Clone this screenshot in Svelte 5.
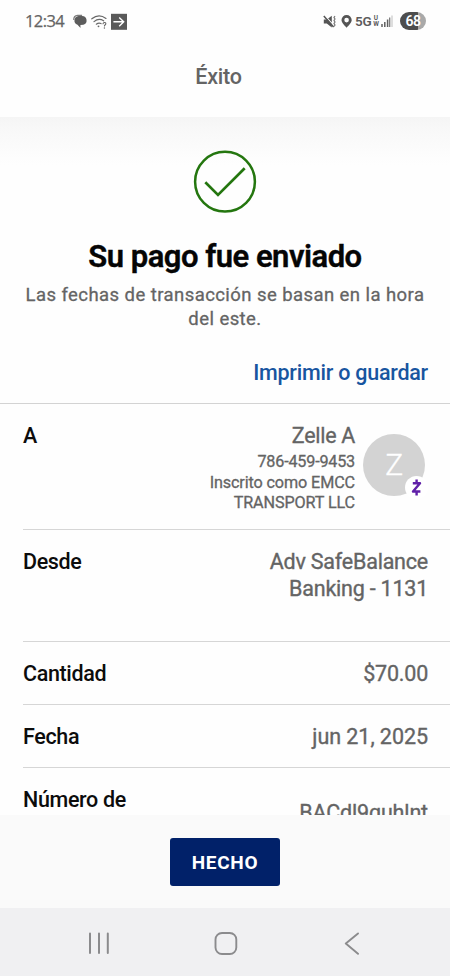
<script>
  const rows = [
    { label: 'Desde', lines: ['Adv SafeBalance', 'Banking - 1131'], kind: 'from' },
    { label: 'Cantidad', lines: ['$70.00'], kind: 'amount' },
    { label: 'Fecha', lines: ['jun 21, 2025'], kind: 'date' },
    { label: 'Número de', lines: ['BACdl9guhlnt'], kind: 'confirm' }
  ];
</script>

<div class="screen">
  <div class="status">
    <span class="time">12:34</span>
    <svg class="left-icons" width="56" height="20" viewBox="0 0 56 20">
      <path d="M5.5 4.9h3.6a4.5 4.5 0 0 1 1.3 8.8l-3 .4.1 3-3-3.3a4.6 4.6 0 0 1 1-8.9Z" fill="#5c5c5c" />
      <path d="M.8 9Q.5 4.6 4.5 4.3h4.6" fill="none" stroke="#7c7c7c" stroke-width="1.3" />
      <g fill="none" stroke="#686868" stroke-width="1.2" stroke-linecap="round">
        <path d="M18.8 7.8Q25.8 2 33 7.4" />
        <path d="M21 10.6Q25.8 6.7 30.6 9.8" />
        <path d="M23.3 13.2Q25.8 11.2 28 12.6" />
        <path d="M30 12.8q.3-1.5 1.7-1.3 1.5.3 1 1.6l-1.2 1.5v.3" stroke-width="1.1" />
      </g>
      <circle cx="25.5" cy="15.3" r="0.9" fill="#686868" />
      <circle cx="31.4" cy="17" r="0.7" fill="#686868" />
      <rect x="38" y="2.8" width="16" height="16" fill="#595959" />
      <path d="M40.4 10.8h10.3M46.2 6.4l4.5 4.4-4.5 4.4" fill="none" stroke="#fff" stroke-width="1.4" />
    </svg>
    <span class="fill"></span>
    <svg class="right-icons" width="32" height="20" viewBox="0 0 32 20">
      <path d="M1.8 8.5h3l5-3.8v11.8l-5-4.1h-3Z" fill="#555" />
      <path d="M2.2 3.9l10 11" stroke="#fff" stroke-width="1.1" />
      <path d="M1.8 5l9.8 11" stroke="#555" stroke-width="1.5" />
      <path d="M13 5l-1 1.5 1 1.5-1 1.5 1 1.5-1 1.5 1 1.5-1 1.5" fill="none" stroke="#777" stroke-width="1.2" />
      <path fill-rule="evenodd" d="M24.6 4a5.1 5.1 0 0 0-5.1 5.1c0 2.7 3.1 5.5 5.1 7.7 2-2.2 5.1-5 5.1-7.7A5.1 5.1 0 0 0 24.6 4Zm0 2.8a2.3 2.3 0 1 1 0 4.6 2.3 2.3 0 0 1 0-4.6Z" fill="#555" />
    </svg>
    <span class="net">5G</span>
    <svg class="uw" width="8" height="14" viewBox="0 0 8 14">
      <text x="4" y="6" text-anchor="middle">U</text>
      <text x="4" y="12.2" text-anchor="middle">W</text>
    </svg>
    <svg class="signal" width="12" height="12" viewBox="0 0 12 12">
      <path d="M1 9v3M3.8 7v5M6.6 4.4v7.6" stroke="#606060" stroke-width="1.5" />
      <path d="M8.7 2.4v9.6" stroke="#707070" stroke-width="1.2" />
      <path d="M11 0.5v11.5" stroke="#c8c8c8" stroke-width="1.2" />
    </svg>
    <span class="battery">68</span>
  </div>

  <header><span>Éxito</span></header>

  <main>
    <section class="hero">
      <svg width="64" height="64" viewBox="0 0 64 64" fill="none" stroke="#24760f">
        <circle cx="32" cy="31.7" r="29.9" stroke-width="2.5" />
        <path d="M12.3 32.3L25 44.9L51.7 18.2" stroke-width="2.7" />
      </svg>
      <h1>Su pago fue enviado</h1>
      <p>Las fechas de transacción se basan en la hora<br />del este.</p>
      <a class="print" href="#save">Imprimir o guardar</a>
    </section>

    <div class="list">
      <div class="row payee">
        <span class="label">A</span>
        <div class="who">
          <span class="name">Zelle A</span>
          <span class="phone">786-459-9453</span>
          <span class="reg">Inscrito como EMCC</span>
          <span class="corp">TRANSPORT LLC</span>
        </div>
        <div class="avatar">
          <span>Z</span>
          <svg class="badge" width="23" height="23" viewBox="0 0 23 23">
            <circle cx="11.5" cy="11.5" r="11.5" fill="#fff" />
            <path d="M7.8 7.3h7.2L8 15.5h7.4M11.6 3.6v3.7M11.6 15.5v4" fill="none" stroke="#6020a8" stroke-width="2.4" stroke-linejoin="round" />
          </svg>
        </div>
      </div>
      {#each rows as row}
        <div class="row {row.kind}">
          <span class="label">{row.label}</span>
          <div class="value">
            {#each row.lines as line}
              <span>{line}</span>
            {/each}
          </div>
        </div>
      {/each}
    </div>
  </main>

  <footer><button>HECHO</button></footer>

  <nav>
    <svg width="22" height="24" viewBox="0 0 22 24"><path d="M2 2.5v19.5M11 2.5v19.5M19.8 2.5v19.5" stroke="#8b8b8d" stroke-width="2" stroke-linecap="round" /></svg>
    <svg width="24" height="24" viewBox="0 0 24 24"><rect x="1.5" y="2" width="20.8" height="21" rx="6.5" fill="none" stroke="#8b8b8d" stroke-width="1.9" /></svg>
    <svg width="16" height="24" viewBox="0 0 16 24"><path d="M14 2.4L1.8 12.6L14 22.8" fill="none" stroke="#8b8b8d" stroke-width="1.9" stroke-linecap="round" stroke-linejoin="round" /></svg>
  </nav>
</div>

<style>
  :global(body) { background: #fefefe; }
  .screen {
    width: 450px; height: 976px; display: flex; flex-direction: column;
    overflow: hidden; background: #fefefe; color: #646464;
    font-family: Roboto, sans-serif; font-weight: 400;
  }
  .screen * { box-sizing: border-box; }
  svg { display: block; flex: none; }
  span { white-space: nowrap; }
  .status { height: 42px; flex: none; display: flex; align-items: center; padding: 0 24px 0 25px; }
  .time { width: 39px; font: 400 16.5px/20px "Open Sans", sans-serif; letter-spacing: -0.6px; -webkit-text-stroke: 0.25px; }
  .left-icons { margin-left: 9px; overflow: visible; }
  .fill { flex: 1; }
  .right-icons { margin-right: 1px; }
  .net { width: 17px; font-weight: 600; font-size: 13.5px; letter-spacing: -0.3px; color: #5c5c5c; }
  .uw { font-size: 6.5px; font-weight: 700; fill: #5c5c5c; }
  .signal { margin: 0 7px 0 1px; }
  .battery {
    width: 26px; height: 18px; border-radius: 9px; text-align: center;
    font-size: 14px; line-height: 18px; font-weight: 600; letter-spacing: -0.4px; color: #fff;
    background: linear-gradient(90deg, #4d4d4d 68%, #a9a9a9 68%);
  }
  header { height: 75px; flex: none; text-align: center; padding: 23px 13px 0 0; font-size: 21.5px; line-height: 24px; font-weight: 500; letter-spacing: -0.2px; }
  main { height: 698px; flex: none; overflow: hidden; background: linear-gradient(#f5f5f5 0, #f9f9f9 16px, #fefefe 48px); }
  .hero { height: 287px; border-bottom: 1px solid #d3d3d3; display: flex; flex-direction: column; align-items: center; padding-top: 33px; }
  h1 { margin: 25px 0 0; color: #050505; font-size: 31px; line-height: 36px; font-weight: 600; letter-spacing: -0.5px; white-space: nowrap; -webkit-text-stroke: 0.4px; }
  p { margin: 8px 0 0; text-align: center; font-size: 18.5px; line-height: 24px; letter-spacing: 0.43px; -webkit-text-stroke: 0.3px; white-space: nowrap; }
  .print { align-self: flex-end; margin: 29px 22px 0 0; font-size: 21.5px; line-height: 26px; font-weight: 500; letter-spacing: -0.24px; color: #1855a0; text-decoration: none; white-space: nowrap; }
  .list { padding-left: 23px; }
  .row { display: flex; justify-content: space-between; border-bottom: 1px solid #d6d6d6; padding: 18px 22px 0 0; font-size: 21.5px; line-height: 27px; letter-spacing: -0.22px; }
  .label { color: #0c0c0c; font-size: 21.5px; font-weight: 500; letter-spacing: -0.35px; }
  .payee { height: 126px; border-bottom: 1px solid #d6d6d6; justify-content: flex-start; padding-right: 25px; }
  .who { flex: 1; display: flex; flex-direction: column; align-items: flex-end; margin-right: 8px; font-size: 16.2px; line-height: 20px; letter-spacing: -0.12px; -webkit-text-stroke: 0.3px; }
  .name { font-size: 21.5px; line-height: 27px; letter-spacing: -0.3px; }
  .phone { margin-top: 2px; line-height: 21px; letter-spacing: -0.2px; }
  .reg { line-height: 21px; }
  .avatar { position: relative; width: 62px; height: 62px; margin-top: 12px; border-radius: 50%; background: #d3d3d3; color: #fff; text-align: center; font-size: 30px; line-height: 62px; font-weight: 300; -webkit-text-stroke: 0.3px; }
  .badge { position: absolute; left: 42px; top: 42px; }
  .value { display: flex; flex-direction: column; align-items: flex-end; -webkit-text-stroke: 0.35px; }
  .from { height: 112px; padding-top: 18px; }
  .amount, .date { height: 63px; }
  .date .value { letter-spacing: -0.05px; }
  .confirm { border: 0; }
  .confirm .value { padding-top: 13px; letter-spacing: -0.15px; }
  footer { height: 93px; flex: none; background: #fafafa; display: flex; justify-content: center; padding-top: 23px; }
  button { width: 110px; height: 48px; border: 0; border-radius: 3px; background: #012169; color: #fff; font: 700 19px/49px Roboto, sans-serif; letter-spacing: 0.7px; padding: 0; }
  nav { flex: 1; background: #f0f0f2; display: flex; justify-content: space-between; padding: 23px 90px 0 88px; }
  nav svg:nth-child(2) { margin-right: 3px; }
</style>
